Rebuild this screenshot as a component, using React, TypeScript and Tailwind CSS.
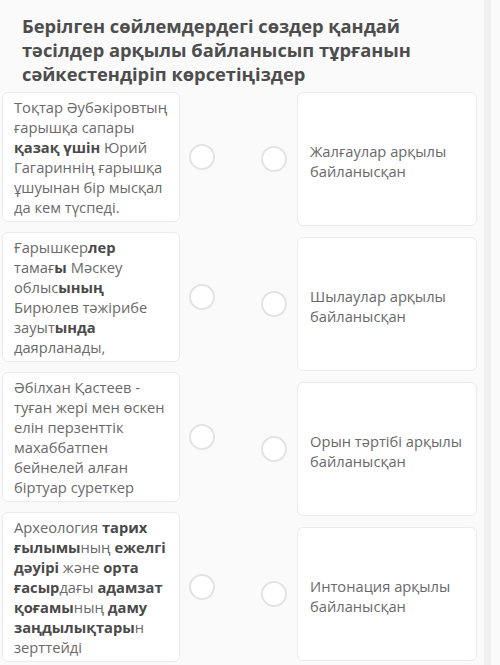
import React from 'react';

type Part = { t: string; b?: boolean };

const leftItems: Part[][] = [
  [
    { t: 'Тоқтар Әубәкіровтың ғарышқа сапары ' },
    { t: 'қазақ үшін', b: true },
    { t: ' Юрий Гагариннің ғарышқа ұшуынан бір мысқал да кем түспеді.' },
  ],
  [
    { t: 'Ғарышкер' },
    { t: 'лер', b: true },
    { t: ' тамағ' },
    { t: 'ы', b: true },
    { t: ' Мәскеу облыс' },
    { t: 'ының', b: true },
    { t: ' Бирюлев тәжірибе зауыт' },
    { t: 'ында', b: true },
    { t: ' даярланады,' },
  ],
  [{ t: 'Әбілхан Қастеев - туған жері мен өскен елін перзенттік махаббатпен бейнелей алған біртуар суреткер' }],
  [
    { t: 'Археология ' },
    { t: 'тарих ғылымы', b: true },
    { t: 'ның ' },
    { t: 'ежелгі дәуірі', b: true },
    { t: ' және ' },
    { t: 'орта ғасыр', b: true },
    { t: 'дағы ' },
    { t: 'адамзат қоғамы', b: true },
    { t: 'ның ' },
    { t: 'даму заңдылықтары', b: true },
    { t: 'н зерттейді' },
  ],
];

const rightItems = [
  'Жалғаулар арқылы байланысқан',
  'Шылаулар арқылы байланысқан',
  'Орын тәртібі арқылы байланысқан',
  'Интонация арқылы байланысқан',
];

function Circle() {
  return <div className="h-[26px] w-[26px] shrink-0 rounded-full border-2 border-[#e3e3e3] bg-white" />;
}

export default function App() {
  return (
    <div
      className="flex h-[665px] w-[500px] overflow-hidden bg-[#fafafa] text-[#6a6a6a]"
      style={{ fontFamily: '"Open Sans", "Noto Sans", sans-serif' }}
    >
      <div className="flex-1">
        <h1 className="pl-[22px] pr-4 pt-[14px] text-[18.3px] font-bold leading-[24px] text-[#4d4d4d]">
          Берілген сөйлемдердегі сөздер қандай тәсілдер арқылы байланысып тұрғанын сәйкестендіріп көрсетіңіздер
        </h1>

        <div className="mt-[6px] flex items-start pl-[2px]">
          <div className="flex flex-col gap-[10px]">
            {leftItems.map((parts, i) => (
              <div key={i} className="flex items-center gap-[9px]">
                <div className="w-[178px] rounded-md border border-[#ebebeb] bg-white px-[11px] py-[4px] text-[14.7px] leading-[20px]">
                  {parts.map((p, j) =>
                    p.b ? (
                      <b key={j} className="font-bold text-[#4a4a4a]">
                        {p.t}
                      </b>
                    ) : (
                      <span key={j}>{p.t}</span>
                    )
                  )}
                </div>
                <Circle />
              </div>
            ))}
          </div>

          <div className="ml-[46px] flex flex-col gap-[11px]">
            {rightItems.map((t, i) => (
              <div key={i} className="flex items-center gap-[10px]">
                <Circle />
                <div className="flex h-[134px] w-[180px] items-center rounded-md border border-[#ebebeb] bg-white px-[12px] pt-[3px] text-[14.7px] leading-[20px]">
                  {t}
                </div>
              </div>
            ))}
          </div>
        </div>
      </div>
      <div className="ml-auto mr-[9px] w-[7px] bg-[#f0f0f0]" />
    </div>
  );
}
